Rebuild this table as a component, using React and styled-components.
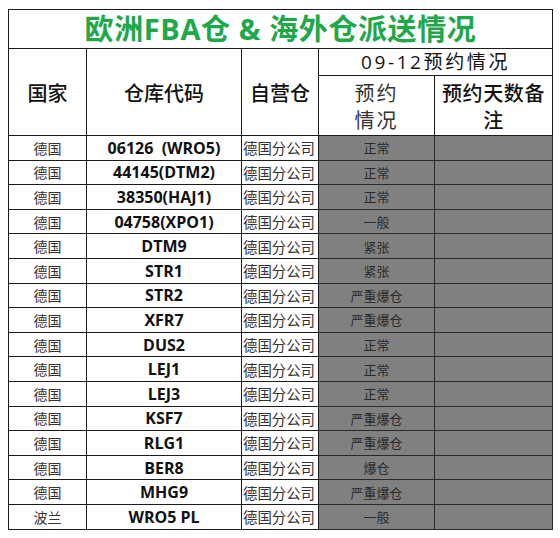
import styled, { createGlobalStyle } from "styled-components";

const rows = [
  ["德国", "06126  (WRO5)", "正常"],
  ["德国", "44145(DTM2)", "正常"],
  ["德国", "38350(HAJ1)", "正常"],
  ["德国", "04758(XPO1)", "一般"],
  ["德国", "DTM9", "紧张"],
  ["德国", "STR1", "紧张"],
  ["德国", "STR2", "严重爆仓"],
  ["德国", "XFR7", "严重爆仓"],
  ["德国", "DUS2", "正常"],
  ["德国", "LEJ1", "正常"],
  ["德国", "LEJ3", "正常"],
  ["德国", "KSF7", "严重爆仓"],
  ["德国", "RLG1", "严重爆仓"],
  ["德国", "BER8", "爆仓"],
  ["德国", "MHG9", "严重爆仓"],
  ["波兰", "WRO5 PL", "一般"],
];

function App() {
  return (
    <>
      <GlobalStyle />
      <Page>
        <Sheet>
          <colgroup>
            <col style={{ width: 78 }} />
            <col style={{ width: 155 }} />
            <col style={{ width: 77 }} />
            <col style={{ width: 116 }} />
            <col style={{ width: 118 }} />
          </colgroup>
          <thead>
            <TitleRow>
              <TitleCell colSpan={5}>欧洲FBA仓 &amp; 海外仓派送情况</TitleCell>
            </TitleRow>
            <tr>
              <HeadCell rowSpan={2}>国家</HeadCell>
              <HeadCell rowSpan={2}>仓库代码</HeadCell>
              <HeadCell rowSpan={2}>自营仓</HeadCell>
              <SubHeadCell colSpan={2}>09-12预约情况</SubHeadCell>
            </tr>
            <tr>
              <WrapHeadCell $light>
                预约
                <br />
                情况
              </WrapHeadCell>
              <WrapHeadCell>
                预约天数备
                <br />
                注
              </WrapHeadCell>
            </tr>
          </thead>
          <tbody>
            {rows.map(([country, code, status], i) => (
              <DataRow key={i}>
                <CountryCell>{country}</CountryCell>
                <CodeCell>{code}</CodeCell>
                <OwnerCell>德国分公司</OwnerCell>
                <GrayCell>{status}</GrayCell>
                <GrayCell />
              </DataRow>
            ))}
          </tbody>
        </Sheet>
      </Page>
    </>
  );
}

const GlobalStyle = createGlobalStyle`
  body {
    margin: 0;
    background: #ffffff;
    font-family: "Open Sans", "Noto Sans CJK SC", sans-serif;
  }
`;

const Page = styled.div`
  padding: 9px 0 0 8px;
`;

const Sheet = styled.table`
  border-collapse: collapse;
  table-layout: fixed;
  width: 544px;
  border: 1.5px solid #222;

  td,
  th {
    border: 1.5px solid #1c1c1c;
    padding: 0;
    text-align: center;
    vertical-align: middle;
    overflow: hidden;
    white-space: nowrap;
  }
`;

const TitleRow = styled.tr`
  height: 39px;
`;

const TitleCell = styled.th`
  color: #1ea84a;
  font-family: "Open Sans", "Noto Sans CJK SC", sans-serif;
  font-size: 29px;
  font-weight: 700;
  line-height: 36px;
  letter-spacing: 0.6px;
`;

const HeadCell = styled.th`
  font-family: "Noto Sans CJK SC", sans-serif;
  font-size: 20px;
  font-weight: 500;
  color: #111;
`;

const SubHeadCell = styled.th`
  height: 26px;
  font-family: "Open Sans", "Noto Sans CJK SC", sans-serif;
  font-size: 19px;
  font-weight: 400;
  color: #111;
  letter-spacing: 2.6px;
  line-height: 24px;
`;

const WrapHeadCell = styled.th`
  height: 59px;
  font-family: "Noto Sans CJK SC", sans-serif;
  font-size: 20px;
  line-height: 27px;
  font-weight: ${(p) => (p.$light ? 400 : 500)};
  color: ${(p) => (p.$light ? "#333" : "#111")};
  letter-spacing: ${(p) => (p.$light ? "2px" : "0.6px")};
`;

const DataRow = styled.tr`
  height: 24.6px;
`;

const CountryCell = styled.td`
  font-family: "Noto Sans CJK SC", sans-serif;
  font-size: 14px;
  color: #333;
`;

const CodeCell = styled.td`
  font-family: "Open Sans", "Noto Sans CJK SC", sans-serif;
  font-size: 16px;
  font-weight: 700;
  color: #111;
  white-space: pre !important;
`;

const OwnerCell = styled.td`
  font-family: "Noto Sans CJK SC", sans-serif;
  font-size: 14.4px;
  color: #333;
  text-align: left !important;
  padding-left: 1px !important;
`;

const GrayCell = styled.td`
  background: #808080;
  font-family: "Noto Sans CJK SC", sans-serif;
  font-size: 13px;
  color: #2a2a2a;
  border-color: #2a2a2a !important;
`;

export default App;
